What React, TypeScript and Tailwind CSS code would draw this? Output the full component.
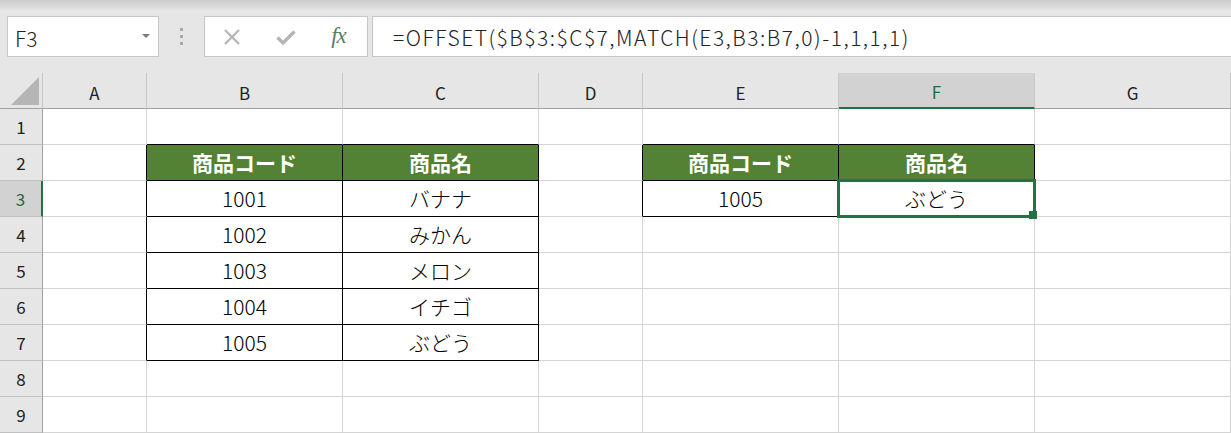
import React from 'react';

const COLS = ['A', 'B', 'C', 'D', 'E', 'F', 'G'];
const ROWS = [1, 2, 3, 4, 5, 6, 7, 8, 9];

// cell contents keyed by "col,row" (col 1 = A)
const DATA: Record<string, string> = {
    '2,2': '商品コード',
    '3,2': '商品名',
    '2,3': '1001',
    '3,3': 'バナナ',
    '2,4': '1002',
    '3,4': 'みかん',
    '2,5': '1003',
    '3,5': 'メロン',
    '2,6': '1004',
    '3,6': 'イチゴ',
    '2,7': '1005',
    '3,7': 'ぶどう',
    '5,2': '商品コード',
    '6,2': '商品名',
    '5,3': '1005',
    '6,3': 'ぶどう',
};

const inTable = (c: number, r: number) =>
    (c >= 2 && c <= 3 && r >= 2 && r <= 7) || (c >= 5 && c <= 6 && r >= 2 && r <= 3);

const isHeader = (c: number, r: number) => r === 2 && inTable(c, r);

function Cell({ c, r }: { c: number; r: number }) {
    const rightBlack = inTable(c, r) || inTable(c + 1, r);
    const bottomBlack = inTable(c, r) || inTable(c, r + 1);
    const hdr = isHeader(c, r);
    const selected = c === 6 && r === 3;

    return (
        <div
            className={
                'flex items-center justify-center border-r border-b text-[21px] leading-none ' +
                (rightBlack ? 'border-r-black ' : 'border-r-[#d4d4d4] ') +
                (bottomBlack ? 'border-b-black ' : 'border-b-[#d4d4d4] ') +
                (hdr ? 'bg-[#548235] text-white font-bold ' : 'bg-white text-black font-light ') +
                (selected ? 'relative' : '')
            }
        >
            {DATA[`${c},${r}`] ?? ''}
            {selected && (
                <>
                    <div className="absolute -inset-[2px] border-[3px] border-[#217346]" />
                    <div className="absolute -right-[3px] -bottom-[3px] w-[8px] h-[8px] bg-[#217346]" />
                </>
            )}
        </div>
    );
}

function FormulaBar() {
    return (
        <div className="h-[73px] flex items-start pt-[16px] pl-[7px] bg-[linear-gradient(to_bottom,#cbcbcb_0px,#e6e6e6_11px)]">
            {/* name box */}
            <div className="w-[152px] h-[41px] flex items-center justify-between bg-white border border-[#c6c6c6] pl-[7px] pr-[8px]">
                <span className="text-[21px] text-[#222] font-light pt-[5px]">F3</span>
                <svg width="8" height="5" viewBox="0 0 8 5">
                    <path d="M0 0 L8 0 L4 4 Z" fill="#7a7a7a" />
                </svg>
            </div>

            <div className="w-[45px] h-[41px] flex flex-col items-center justify-center gap-[4px]">
                <span className="w-[3px] h-[3px] bg-[#a8a8a8]" />
                <span className="w-[3px] h-[3px] bg-[#a8a8a8]" />
                <span className="w-[3px] h-[3px] bg-[#a8a8a8]" />
            </div>

            {/* cancel / enter / fx */}
            <div className="w-[164px] h-[41px] grid grid-cols-3 bg-white border border-[#c6c6c6]">
                <div className="flex items-center justify-center pt-[1px]">
                    <svg width="18" height="16" viewBox="0 0 18 16">
                        <path d="M2 1 L16 15 M16 1 L2 15" stroke="#b4b4b4" strokeWidth="2.2" fill="none" />
                    </svg>
                </div>
                <div className="flex items-center justify-center pt-[2px]">
                    <svg width="20" height="15" viewBox="0 0 20 15">
                        <path d="M1.5 7.5 L7 13 L18.5 1.5" stroke="#b4b4b4" strokeWidth="3.2" fill="none" />
                    </svg>
                </div>
                <div className="flex items-center justify-center pr-[3px]">
                    <span className="font-['Liberation_Serif',serif] italic font-medium text-[23px] text-[#5a7d66] tracking-[-1px]">
                        fx
                    </span>
                </div>
            </div>

            {/* formula input */}
            <div className="flex-1 h-[41px] ml-[4px] flex items-center bg-white border border-r-0 border-[#c6c6c6] pl-[20px]">
                <span className="text-[21px] text-[#222] font-light tracking-[1.5px] leading-none pt-[2px]">
                    =OFFSET($B$3:$C$7,MATCH(E3,B3:B7,0)-1,1,1,1)
                </span>
            </div>
        </div>
    );
}

export default function App() {
    return (
        <div className="w-[1231px] h-[433px] overflow-hidden bg-[#e6e6e6] font-['Noto_Sans_CJK_JP',sans-serif]">
            <FormulaBar />

            <div className="grid grid-cols-[43px_104px_196px_196px_104px_196px_196px_196px] grid-rows-[repeat(10,36px)]">
                {/* corner */}
                <div className="flex items-end justify-end pr-[3px] pb-[3px] border-r border-b border-r-[#c8c8c8] border-b-[#a0a0a0]">
                    <svg width="28" height="28" viewBox="0 0 28 28">
                        <path d="M28 0 L28 28 L0 28 Z" fill="#b5b5b5" />
                    </svg>
                </div>

                {/* column headers */}
                {COLS.map((col) =>
                    col === 'F' ? (
                        <div
                            key={col}
                            className="flex items-center justify-center pt-[4px] border-r border-r-[#c8c8c8] border-b-2 border-b-[#217346] bg-[#d2d2d2] text-[17px] text-[#1e6b41]"
                        >
                            {col}
                        </div>
                    ) : (
                        <div
                            key={col}
                            className="flex items-center justify-center pt-[4px] border-r border-r-[#c8c8c8] border-b border-b-[#a0a0a0] text-[17px] text-[#222]"
                        >
                            {col}
                        </div>
                    )
                )}

                {ROWS.map((r) => (
                    <React.Fragment key={r}>
                        {r === 3 ? (
                            <div className="flex items-center justify-center border-r-2 border-r-[#217346] border-b border-b-[#c0c0c0] bg-[#d2d2d2] text-[17px] text-[#1e6b41]">
                                {r}
                            </div>
                        ) : (
                            <div className="flex items-center justify-center border-r border-r-[#a0a0a0] border-b border-b-[#c0c0c0] text-[17px] text-[#222]">
                                {r}
                            </div>
                        )}
                        {COLS.map((_, i) => (
                            <Cell key={i} c={i + 1} r={r} />
                        ))}
                    </React.Fragment>
                ))}
            </div>
        </div>
    );
}
